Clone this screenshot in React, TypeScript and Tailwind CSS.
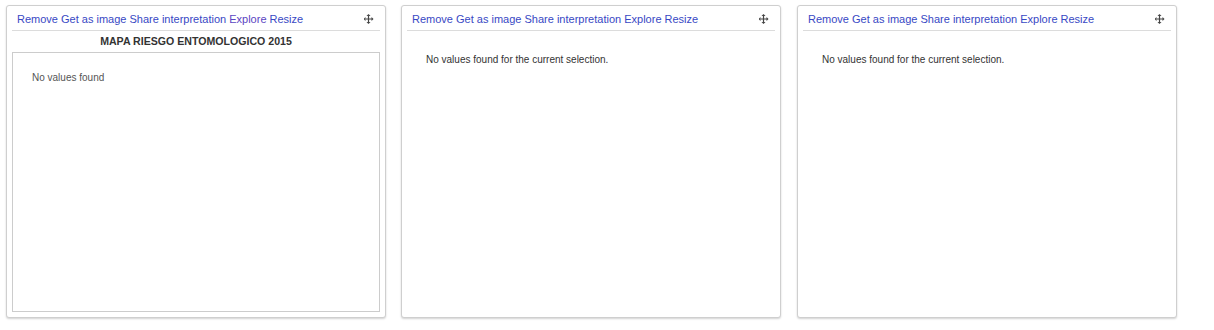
import React from 'react';

const links = ['Remove', 'Get as image', 'Share interpretation', 'Explore', 'Resize'];

const MoveIcon = () => (
  <svg width="10" height="10" viewBox="0 0 10 10" className="text-[#444]">
    <path d="M4.5 1.5v7M1.5 5h7" stroke="currentColor" strokeWidth="1.2" fill="none" />
    <path d="M5 0L3 2h4zM5 10L3 8h4zM0 5l2-2v4zM10 5L8 3v4z" fill="currentColor" transform="translate(-0.5 0)" />
  </svg>
);

interface PanelProps {
  title?: string;
  message: string;
  visited?: string;
}

const Panel: React.FC<PanelProps> = ({ title, message, visited }) => (
  <div className="w-[380px] h-[313px] shrink-0 flex flex-col bg-white border border-[#cfcfcf] rounded-[3px] shadow-[0_1px_2px_rgba(0,0,0,0.18)] px-[5px] pb-[5px]">
    <div className="flex items-start justify-between border-b border-[#dcdcdc] pt-[6px] pb-[4px] leading-[14px] text-[11px]">
      <div className="pl-[5px]">
        {links.map((l, i) => (
          <React.Fragment key={l}>
            <a className={`cursor-pointer ${visited === l ? 'text-[#5b45c2]' : 'text-[#3848c4]'}`}>{l}</a>
            {i < links.length - 1 ? ' ' : ''}
          </React.Fragment>
        ))}
      </div>
      <div className="pt-[2px] pr-[6px]">
        <MoveIcon />
      </div>
    </div>
    {title ? (
      <>
        <div className="h-[21px] flex items-center justify-center text-[10.6px] font-bold text-[#333]">{title}</div>
        <div className="flex-1 border border-[#cccccc] pt-[18px] pl-[19px] text-[10px] leading-[14px] text-[#555]">{message}</div>
      </>
    ) : (
      <div className="flex-1 pt-[22px] pl-[19px] text-[10px] leading-[14px] text-[#333]">{message}</div>
    )}
  </div>
);

export default function App() {
  return (
    <div className="w-[1214px] h-[330px] bg-white pt-[5px] pl-[6px] flex gap-[15px] font-['Liberation_Sans',Arial,sans-serif]">
      <Panel title="MAPA RIESGO ENTOMOLOGICO 2015" message="No values found" visited="Explore" />
      <Panel message="No values found for the current selection." />
      <div className="pl-[1px]">
        <Panel message="No values found for the current selection." />
      </div>
    </div>
  );
}
